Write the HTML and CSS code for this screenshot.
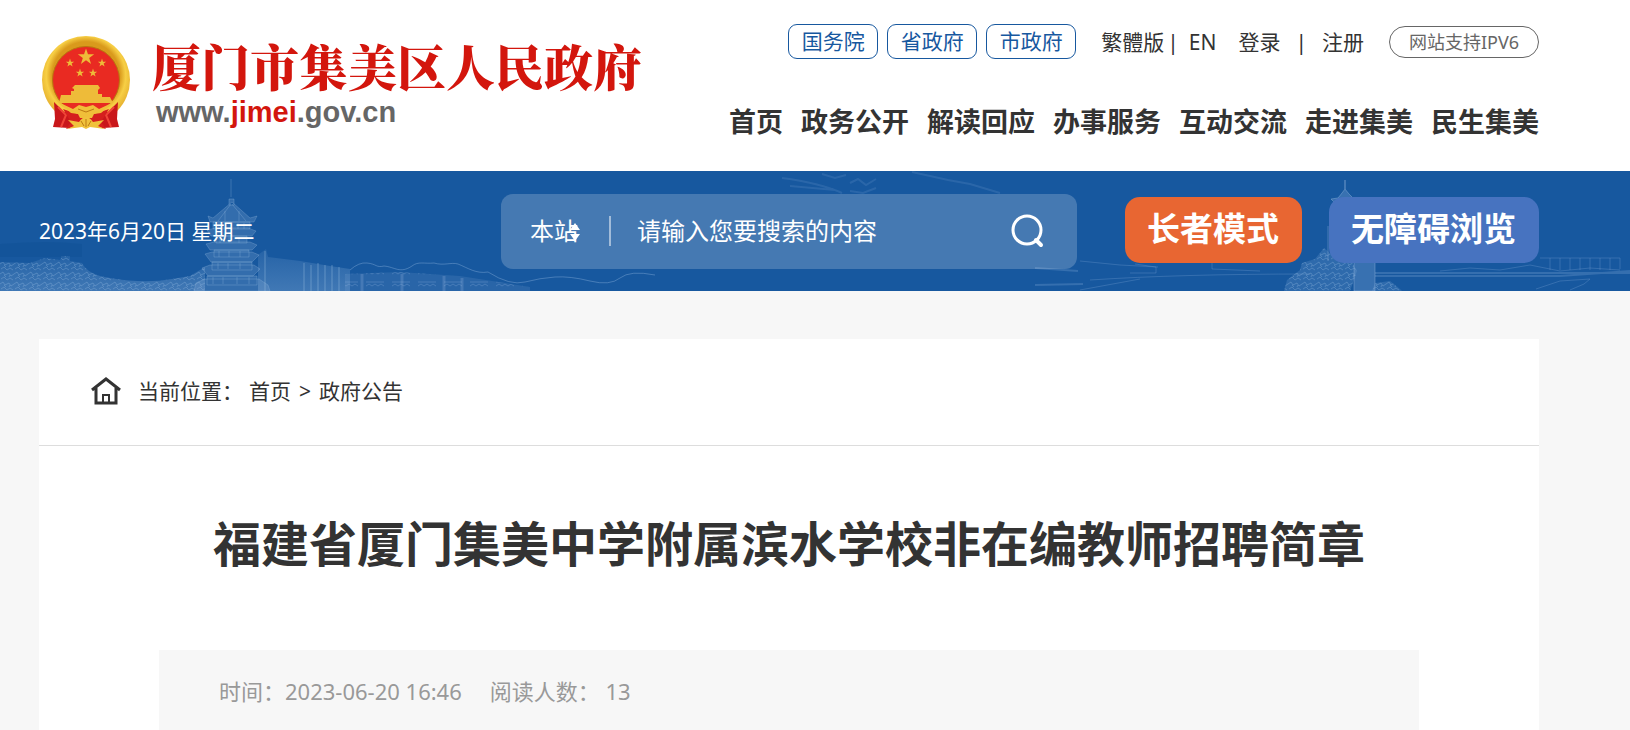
FILE: index.html
```html
<!DOCTYPE html>
<html lang="zh-CN">
<head>
  <meta charset="UTF-8">
  <meta name="viewport" content="width=device-width, initial-scale=1.0">
  <title>福建省厦门集美中学附属滨水学校非在编教师招聘简章</title>
  <link rel="stylesheet" href="styles.css">
</head>
<body>
  <header class="header wrap">
    <div class="logo">
      <svg class="emblem" viewBox="0 0 90 96" aria-hidden="true">
        <defs>
          <radialGradient id="gold" cx="50%" cy="45%" r="55%">
            <stop offset="0.7" stop-color="#d99a1c"/>
            <stop offset="0.82" stop-color="#f7cf45"/>
            <stop offset="1" stop-color="#e3ab2b"/>
          </radialGradient>
          <path id="star" d="M0-10 2.3-3.1 9.5-3.1 3.7 1.2 5.9 8.1 0 3.9-5.9 8.1-3.7 1.2-9.5-3.1-2.3-3.1z"/>
        </defs>
        <circle cx="45" cy="45" r="44" fill="url(#gold)"/>
        <circle cx="45" cy="45" r="33.5" fill="#e92a22" stroke="#b9770f" stroke-width="1"/>
        <g fill="#eebb39">
          <use href="#star" transform="translate(45 22) scale(.86)"/>
          <use href="#star" transform="translate(29 28) scale(.44)"/>
          <use href="#star" transform="translate(61 28) scale(.44)"/>
          <use href="#star" transform="translate(39 38) scale(.44)"/>
          <use href="#star" transform="translate(52 38) scale(.44)"/>
          <path d="M34 50H57L59 53 57 55V59H61V62H69L72 68H18L20 60H30V56H33V54L31 53z"/>
          <path d="M21 68H69L62 73Q45 80 28 73z" fill="#e92a22"/>
        </g>
        <path d="M13 67 23 77 35 77 28 93 12 92 14 84zM77 67 67 77 55 77 62 93 78 92 76 84z" fill="#c9171b"/>
        <path d="M17 72 25 80 20 92M73 72 65 80 70 92" fill="none" stroke="#f04437" stroke-width="2"/>
        <path d="M22 74 37 79 53 79 68 74 60 87 65 94 53 91 37 91 25 94 30 87z" fill="#d51f1e"/>
        <path d="M17 67 32 74 38 70 45 72 52 70 58 74 73 67 60 78 53 79 51 83 39 83 37 79 30 78z" fill="#f0bf39"/>
        <path d="M27 85 38 87Q45 77 52 87L63 85 57 91 64 94 49 92 45 94 41 92 26 94 33 91z" fill="#f0c23c"/>
        <path d="M37 74 45 77 53 74M45 84V92M40 86 43 91M50 86 47 91" fill="none" stroke="#bd7a12"/>
      </svg>
      <div>
        <div class="site-name">厦门市集美区人民政府</div>
        <div class="site-url">www.<span>jimei</span>.gov.cn</div>
      </div>
    </div>
    <div class="header-right">
      <div class="top-links">
        <a class="gov" href="#">国务院</a>
        <a class="gov" href="#">省政府</a>
        <a class="gov" href="#">市政府</a>
        <div class="user-links">
          <a href="#">繁體版</a><span class="bar-tight">|</span><a href="#">EN</a>
          <a class="login" href="#">登录</a><span class="bar">|</span><a href="#">注册</a>
        </div>
        <a class="ipv6" href="#">网站支持IPV6</a>
      </div>
      <nav class="nav">
        <a href="#">首页</a>
        <a href="#">政务公开</a>
        <a href="#">解读回应</a>
        <a href="#">办事服务</a>
        <a href="#">互动交流</a>
        <a href="#">走进集美</a>
        <a href="#">民生集美</a>
      </nav>
    </div>
  </header>

  <div class="banner">
    <svg class="scenery" viewBox="0 0 1630 120" preserveAspectRatio="xMidYMax slice" aria-hidden="true">
      <defs>
        <linearGradient id="fade" x1="0" x2="0" y1="0" y2="1">
          <stop offset="0" stop-color="#8db4de" stop-opacity=".12"/>
          <stop offset="1" stop-color="#8db4de" stop-opacity=".35"/>
        </linearGradient>
        <pattern id="leaf" width="14" height="10" patternUnits="userSpaceOnUse">
          <path d="M0 3 3 1 5 4 9 2 11 5 14 3M1 8 4 6 7 9 10 7 13 9M4 4 6 6M10 4 9 6" fill="none" stroke="#9fc1e6" stroke-opacity=".3"/>
        </pattern>
        <pattern id="windows" width="26" height="12" patternUnits="userSpaceOnUse">
          <path d="M2 3H20M2 7 5 5 8 7 11 5 14 7 17 5 20 7" fill="none" stroke="#9fc1e6" stroke-opacity=".25"/>
        </pattern>
      </defs>
      <!-- trees and rooftops on the left -->
      <path d="M0 73Q50 69 82 73V86H0z" fill="#0f4f93" opacity=".4"/>
      <path d="M0 91 30 92 45 87 60 89 62 85H70V90L82 92Q88 104 110 107 145 113 172 108L190 105 205 96 205 120H0z" fill="url(#fade)"/>
      <path d="M0 91 30 92 45 87 60 89 62 85H70V90L82 92Q88 104 110 107 145 113 172 108L190 105 205 96 205 120H0z" fill="url(#leaf)"/>
      <!-- pagoda -->
      <g fill="#86add9" fill-opacity=".25" stroke="#a7c6e8" stroke-opacity=".25">
        <path d="M231 8V26M229 28H234V34H229zM232 31 213 47 208 45 210 51H254L257 45 250 47z"/>
        <path d="M231 33 218 50M232 33 246 50M225 40V50M239 40V50" fill="none"/>
        <path d="M213 51H250V58H213zM207 59 216 57H248L256 60 252 65H211zM216 65H247V72H216zM206 73 214 71H250L257 74 252 79H210zM214 79H249V86H214zM205 83 212 81H252L259 84 252 91H211zM212 91H252V99H212zM202 97 210 94H254L260 98 253 105H208zM207 105H257V114H207zM196 112 205 108H259L268 114 270 120H194z"/>
        <path d="M219 52V58M226 52V58M238 52V58M244 52V58M220 66V72M229 66V72M239 66V72M219 80V86M229 80V86M240 80V86M218 92V98M228 92V98M240 92V98M213 106V113M223 106V113M237 106V113M249 106V113" fill="none"/>
      </g>
      <path d="M258 84 266 78 268 86 300 90 330 95 350 98 350 120H258z" fill="url(#fade)"/>
      <path d="M265 80V120M304 92V120M311 94V120M318 92V120M325 94V120M332 94V120M339 96V120" stroke="#a7c6e8" stroke-opacity=".2" stroke-width="2"/>
      <path d="M350 99Q359 91 367 92C377 93 376 97 384 95 395 96 400 103 412 95 418 90 425 93 434 92 444 95 451 91 458 93 468 97 476 103 488 101Q510 115 525 111T555 106 590 110 620 107 655 104" fill="none" stroke="#8fb5df" stroke-opacity=".4"/>
      <path d="M345 103 400 101 460 105 530 116V120H345z" fill="#86add9" fill-opacity=".16"/>
      <path d="M345 103 400 101 460 105 530 116V120H345z" fill="url(#windows)"/>
      <path d="M362 103V120M402 103V120M444 105V120M462 107V120" stroke="#a7c6e8" stroke-opacity=".22" stroke-width="3"/>
      <!-- branches over the search box -->
      <path d="M782 7Q820 12 842 22M790 15 835 19M822 3 835 7 846 4M850 12 858 8 866 14 876 8M850 20 863 22 876 17M912 1 930 5 948 9 970 13 1000 22" fill="none" stroke="#8fb5df" stroke-opacity=".16" stroke-width="2"/>
      <!-- bridge on the right -->
      <g fill="none" stroke="#8fb5df" stroke-opacity=".25">
        <path d="M1035 97 1078 100M1035 114 1083 113" stroke-width="2"/>
        <path d="M1080 90 1120 94 1158 96M1130 102H1156V96L1135 93M1090 109Q1180 103 1310 103M1212 92V98L1260 100M1080 119 1140 108"/>
        <path d="M1375 102H1630M1375 105H1560L1630 100" stroke-width="2"/>
        <path d="M1440 100 1470 97 1500 99 1530 94 1560 100 1590 97 1620 99"/>
        <path d="M1540 87H1620V98M1550 87V99M1560 87V99M1570 87V99M1580 87V99M1590 87V99M1600 87V99M1610 87V99M1536 118 1560 110 1590 108 1584 113 1570 119"/>
      </g>
      <path d="M1345 9V18L1349 23 1353 27 1361 27 1356 33H1336L1331 28 1338 27 1342 22 1345 18zM1328 55V90M1354 90H1375V120H1354z" fill="#86add9" fill-opacity=".3" stroke="#a7c6e8" stroke-opacity=".35"/>
      <path d="M1284 120 1287 109 1300 99 1302 92 1315 88 1324 77 1332 84 1350 88 1357 100 1350 120zM1375 112 1390 110 1400 118 1402 120H1372z" fill="#86add9" fill-opacity=".22"/>
      <path d="M1284 120 1287 109 1300 99 1302 92 1315 88 1324 77 1332 84 1350 88 1357 100 1350 120zM1375 112 1390 110 1400 118 1402 120H1372z" fill="url(#leaf)"/>
    </svg>
    <div class="banner-row wrap">
      <div class="date">2023年6月20日 星期二</div>
      <form class="search">
        <div class="scope">
          <select aria-label="搜索范围">
            <option>本站</option>
          </select>
          <svg viewBox="0 0 10 18" aria-hidden="true"><path d="M0 7 5 0 10 7zM0 11 5 18 10 11z" fill="#fff"/></svg>
        </div>
        <input type="text" aria-label="搜索" placeholder="请输入您要搜索的内容">
        <button type="submit" aria-label="搜索">
          <svg viewBox="0 0 34 34" aria-hidden="true">
            <circle cx="16" cy="16" r="14" fill="none" stroke="#fff" stroke-width="3"/>
            <path d="M25 26 30 31" stroke="#fff" stroke-width="4" stroke-linecap="round"/>
          </svg>
        </button>
      </form>
      <div class="modes">
        <a class="mode elder" href="#">长者模式</a>
        <a class="mode access" href="#">无障碍浏览</a>
      </div>
    </div>
  </div>

  <main class="content wrap">
    <div class="crumbs">
      <svg viewBox="0 0 30 28" aria-hidden="true">
        <path d="M1 13 15 2 29 13M5 11V26H25V11" fill="none" stroke="#333" stroke-width="3"/>
        <path d="M12 26V18H18V26" fill="none" stroke="#333" stroke-width="2"/>
      </svg>
      <span class="here">当前位置：</span>
      <a href="#">首页</a>
      <span class="arrow">&gt;</span>
      <a href="#">政府公告</a>
    </div>
    <h1>福建省厦门集美中学附属滨水学校非在编教师招聘简章</h1>
    <div class="info">
      <span>时间：2023-06-20 16:46</span>
      <span>阅读人数： 13</span>
    </div>
  </main>
</body>
</html>
```

FILE: styles.css
```css
* {
  box-sizing: border-box;
}
body {
  margin: 0;
  background: #f7f7f7;
  color: #333;
  font-family: "Noto Sans", "Noto Sans CJK SC", sans-serif;
  font-size: 21px;
  line-height: 30px;
}
a {
  color: inherit;
  text-decoration: none;
}
.wrap {
  margin: 0 91px 0 39px;
}
body::before {
  content: "";
  position: absolute;
  z-index: -1;
  top: 0;
  left: 0;
  right: 0;
  height: 171px;
  background: #fff;
}

/* header */
.header {
  display: flex;
  justify-content: space-between;
  height: 171px;
}
.logo {
  display: flex;
  align-items: flex-start;
  gap: 21px;
  padding: 35px 0 0 2px;
}
.emblem {
  width: 90px;
  height: 96px;
}
.site-name {
  color: #d3160d;
  font-family: "Noto Serif CJK SC", "Noto Sans CJK SC", sans-serif;
  font-size: 49px;
  font-weight: 900;
  line-height: 60px;
}
.site-url {
  padding-left: 4px;
  color: #666;
  font-family: "Liberation Sans", Arial, sans-serif;
  font-size: 29px;
  font-weight: bold;
  line-height: 34px;
}
.site-url span {
  color: #d3160d;
}
.header-right {
  display: flex;
  flex-direction: column;
  align-items: flex-end;
  padding-top: 24px;
}
.top-links {
  display: flex;
  align-items: center;
  gap: 9px;
}
.gov {
  width: 90px;
  border: 1px solid #17589f;
  border-radius: 9px;
  color: #17589f;
  line-height: 33px;
  text-align: center;
}
.user-links {
  display: flex;
  margin: 0 16px;
}
.bar-tight {
  margin: 0 10px 0 3px;
}
.bar {
  margin: 0 15px;
}
.login {
  margin-left: 22px;
}
.ipv6 {
  width: 150px;
  border: 1px solid #666;
  border-radius: 16px;
  color: #666;
  font-size: 18px;
  text-align: center;
}
.nav {
  display: flex;
  gap: 18px;
  padding-top: 42px;
  font-size: 27px;
  font-weight: bold;
  line-height: 42px;
}

/* blue banner */
.banner {
  position: relative;
  overflow: hidden;
  background: #17589f;
}
.scenery {
  position: absolute;
  inset: 0;
  width: 100%;
  height: 100%;
}
.banner-row {
  position: relative;
  display: flex;
  align-items: center;
  height: 120px;
}
.date {
  flex: 1;
  color: #fff;
  white-space: nowrap;
}
.search {
  display: flex;
  flex: 0 1 576px;
  align-items: center;
  height: 75px;
  padding: 0 32px 0 29px;
  border-radius: 12px;
  background: rgba(255, 255, 255, 0.2);
}
.search select,
.search input,
.search button {
  padding: 0;
  border: 0;
  background: none;
  color: #fff;
  font: inherit;
  font-size: 24px;
  line-height: 36px;
}
.search select {
  width: 50px;
  appearance: none;
}
.search select option {
  color: #333;
}
.search input {
  flex: 1;
  min-width: 0;
  padding-left: 26px;
}
.search input::placeholder {
  color: #fff;
  opacity: 1;
}
.search button svg {
  display: block;
  width: 34px;
  height: 34px;
}
.scope {
  position: relative;
  display: flex;
  align-items: center;
  height: 30px;
  padding-right: 29px;
  border-right: 2px solid rgba(255, 255, 255, 0.5);
}
.scope svg {
  position: absolute;
  top: 7px;
  left: 40px;
  width: 10px;
  height: 18px;
  pointer-events: none;
}
.modes {
  display: flex;
  gap: 27px;
  margin: 0 0 2px 48px;
}
.mode {
  padding: 0 23px 2px 22px;
  border-radius: 15px;
  color: #fff;
  font-size: 33px;
  font-weight: bold;
  line-height: 64px;
  white-space: nowrap;
}
.elder {
  background: #e86632;
}
.access {
  background: #4773c0;
}

/* article */
.content {
  min-height: 391px;
  margin-top: 48px;
  background: #fff;
}
.crumbs {
  display: flex;
  align-items: center;
  height: 107px;
  padding: 0 52px 2px;
  border-bottom: 1px solid #ddd;
}
.crumbs svg {
  width: 30px;
  height: 28px;
  margin-right: 17px;
}
.here {
  margin-right: 6px;
}
.arrow {
  margin: 0 8px;
}
h1 {
  margin: 0;
  padding: 62px 0 70px;
  font-size: 48px;
  font-weight: bold;
  line-height: 72px;
  text-align: center;
}
.info {
  display: flex;
  gap: 28px;
  margin: 0 120px;
  padding: 26px 60px 24px;
  background: #f7f7f7;
  color: #999;
  font-size: 22px;
}
```
